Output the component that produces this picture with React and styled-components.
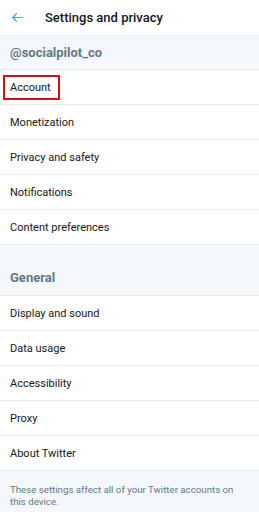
import React from 'react';
import styled, { createGlobalStyle } from 'styled-components';

const GlobalStyle = createGlobalStyle`
  html, body { margin: 0; padding: 0; background: #ffffff; }
  body { font-family: Roboto, "Noto Sans", sans-serif; }
`;

const Screen = styled.div`
  width: 259px;
  height: 512px;
  overflow: hidden;
  background: #ffffff;
`;

const TopBar = styled.div`
  height: 36px;
  display: flex;
  align-items: center;
  border-bottom: 1px solid #e6ecf0;
  box-sizing: border-box;
`;

const BackButton = styled.div`
  width: 45px;
  display: flex;
  align-items: center;
  padding-left: 11px;
  box-sizing: border-box;
`;

const Title = styled.div`
  font-size: 13px;
  color: #14171a;
  font-weight: 500;
`;

const SectionHeader = styled.div`
  background: #f5f8fa;
  height: ${({ tall }) => (tall ? 51 : 34)}px;
  display: flex;
  align-items: ${({ tall }) => (tall ? 'flex-end' : 'center')};
  padding: 0 10px ${({ tall }) => (tall ? 10 : 0)}px;
  box-sizing: border-box;
  border-bottom: 1px solid #e6ecf0;
  font-size: 13px;
  font-weight: 700;
  color: #657786;
`;

const Row = styled.div`
  height: 35px;
  display: flex;
  align-items: center;
  padding: 0 10px;
  box-sizing: border-box;
  border-bottom: 1px solid #e6ecf0;
  font-size: 11px;
  color: #14171a;
`;

const Highlight = styled.span`
  border: 2px solid #d0121b;
  padding: 4px 7px 4px 5px;
  margin-left: -7px;
`;

const Footer = styled.div`
  background: #f5f8fa;
  padding: 13px 10px 4px;
  font-size: 9.7px;
  line-height: 12px;
  color: #657786;
  border-bottom: 1px solid #e6ecf0;
`;

const BackArrow = () => (
  <svg width="13" height="13" viewBox="0 0 24 24" fill="none" stroke="#4fa6d8" strokeWidth="2.2" strokeLinecap="round" strokeLinejoin="round">
    <path d="M21 12H3" />
    <path d="M10 5l-7 7 7 7" />
  </svg>
);

const accountItems = ['Monetization', 'Privacy and safety', 'Notifications', 'Content preferences'];
const generalItems = ['Display and sound', 'Data usage', 'Accessibility', 'Proxy', 'About Twitter'];

export default function App() {
  return (
    <Screen>
      <GlobalStyle />
      <TopBar>
        <BackButton><BackArrow /></BackButton>
        <Title>Settings and privacy</Title>
      </TopBar>
      <SectionHeader>@socialpilot_co</SectionHeader>
      <Row><Highlight>Account</Highlight></Row>
      {accountItems.map((item) => (
        <Row key={item}>{item}</Row>
      ))}
      <SectionHeader tall>General</SectionHeader>
      {generalItems.map((item) => (
        <Row key={item}>{item}</Row>
      ))}
      <Footer>These settings affect all of your Twitter accounts on this device.</Footer>
    </Screen>
  );
}
